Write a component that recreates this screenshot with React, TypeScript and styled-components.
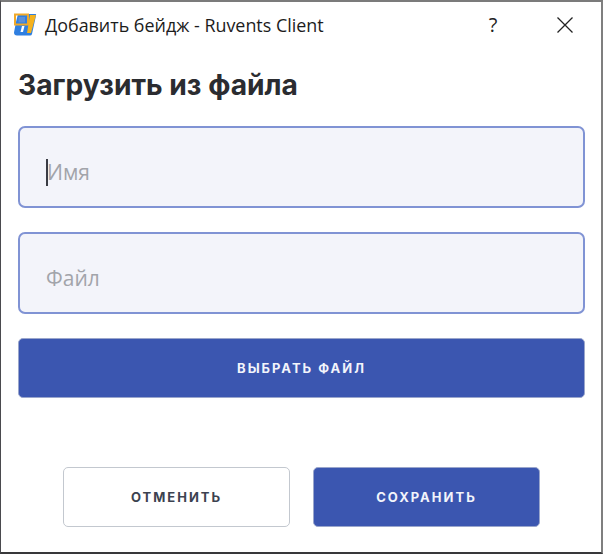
import * as React from 'react'
import styled, { createGlobalStyle } from 'styled-components'

const Global = createGlobalStyle`
  html, body {
    margin: 0;
    padding: 0;
    background: #fff;
  }
`

const Window = styled.div`
  box-sizing: border-box;
  width: 603px;
  height: 554px;
  display: flex;
  flex-direction: column;
  background: #fff;
  border-top: 2px solid #7b7b7b;
  border-left: 1px solid #4a4a4e;
  border-right: 2px solid #7f7f7f;
  border-bottom: 2px solid #38383a;
  overflow: hidden;
`

const TitleBar = styled.div`
  height: 45px;
  flex: none;
  display: flex;
  align-items: center;
  padding-left: 12px;
  font-family: 'Open Sans', 'Noto Sans', sans-serif;
  font-size: 17.9px;
  color: #1c1c1c;
`

const AppTitle = styled.span`
  margin-left: 7px;
  flex: 1;
`

const HelpMark = styled.span`
  width: 22px;
  text-align: center;
  font-size: 20px;
  color: #222;
`

const CloseButton = styled.span`
  display: flex;
  margin-left: 53px;
  margin-right: 28px;
  color: #222;
`

const Content = styled.div`
  display: flex;
  flex-direction: column;
  padding: 0 16px 0 17px;
`

const Heading = styled.h1`
  margin: 21px 0 0;
  height: 34px;
  line-height: 34px;
  font-family: 'Inter', 'Noto Sans', sans-serif;
  font-size: 28.2px;
  font-weight: 700;
  color: #2b2c30;
`

const Field = styled.div<{ $gap: number }>`
  box-sizing: border-box;
  height: 82px;
  margin-top: ${p => p.$gap}px;
  display: flex;
  align-items: center;
  padding: 10px 0 0 26px;
  background: #f3f4fa;
  border: 2px solid #8093d4;
  border-radius: 7px;
  font-family: 'Open Sans', 'Noto Sans', sans-serif;
  font-size: 21px;
  color: #a2a4aa;
`

const Caret = styled.span`
  width: 2px;
  height: 27px;
  margin-right: -1px;
  background: #3a3c44;
`

const Button = styled.button<{ $outlined?: boolean; $wide?: boolean }>`
  box-sizing: border-box;
  width: ${p => (p.$wide ? '567px' : '227px')};
  height: 60px;
  padding: 0;
  border: 1px solid ${p => (p.$outlined ? '#c3c8cf' : '#9aa6cc')};
  border-radius: 5px;
  background: ${p => (p.$outlined ? '#fff' : '#3b56b0')};
  color: ${p => (p.$outlined ? '#3c4250' : '#f2f4fb')};
  font-family: 'Inter', 'Noto Sans', sans-serif;
  font-size: 13px;
  font-weight: 700;
  letter-spacing: 2px;
`

const WideRow = styled.div`
  display: flex;
  margin-top: 24px;
`

const Actions = styled.div`
  display: flex;
  gap: 23px;
  margin-top: 69px;
  padding-left: 45px;
`

const BadgeIcon = () => (
  <svg width="25" height="25" viewBox="0 0 25 25">
    <path d="M5 2h17a1 1 0 0 1 1 1.400L19 22a2 2 0 0 1-2 1.500H4a3 3 0 0 1-3-3L3 10z" fill="#2f7fe0" />
    <path d="M17 3h6l-5 18h-4z" fill="#f5b21e" />
    <path d="M2 2.500h13v10H2z" fill="none" stroke="#f0a92a" strokeWidth="2" />
    <path d="M5.500 5h6.500v5.500H5.500z" fill="#5b8fd8" />
    <path d="M9 14h2.500l-1.500 6H7.500z" fill="#fff" />
  </svg>
)

const CloseIcon = () => (
  <svg width="16" height="16" viewBox="0 0 16 16">
    <path d="M0.500 0.500l15 15M15.500 0.500l-15 15" stroke="currentColor" strokeWidth="1.300" fill="none" />
  </svg>
)

export default function App() {
  return (
    <Window>
      <Global />
      <TitleBar>
        <BadgeIcon />
        <AppTitle>Добавить бейдж - Ruvents Client</AppTitle>
        <HelpMark>?</HelpMark>
        <CloseButton>
          <CloseIcon />
        </CloseButton>
      </TitleBar>
      <Content>
        <Heading>Загрузить из файла</Heading>
        <Field $gap={24}>
          <Caret />
          Имя
        </Field>
        <Field $gap={24}>Файл</Field>
        <WideRow>
          <Button $wide>ВЫБРАТЬ ФАЙЛ</Button>
        </WideRow>
        <Actions>
          <Button $outlined>ОТМЕНИТЬ</Button>
          <Button>СОХРАНИТЬ</Button>
        </Actions>
      </Content>
    </Window>
  )
}
